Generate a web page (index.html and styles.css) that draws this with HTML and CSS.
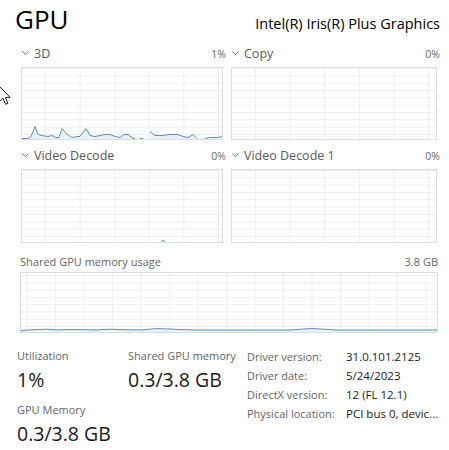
FILE: index.html
```html
<!DOCTYPE html>
<html lang="en">
<head>
<meta charset="utf-8">
<title>GPU</title>
<link rel="stylesheet" href="styles.css">
</head>
<body>
<div class="page">
  <header class="top">
    <h1 class="title">GPU</h1>
    <div class="adapter">Intel(R) Iris(R) Plus Graphics</div>
  </header>

  <section class="engines">
    <div class="engine">
      <div class="engine-head">
        <span class="engine-name"><svg class="chev" width="7" height="4" viewBox="0 0 7 4"><polyline points="0.5,0.5 3.5,3.5 6.5,0.5" /></svg>3D</span>
        <span class="pct">1%</span>
      </div>
      <div class="chart">
        <svg class="plot" viewBox="0 0 200 71.5" preserveAspectRatio="none">
          <path class="area" d="M0 71.5 L0 70.5 L6 70.5 L9 68.5 L13 58.5 L16 66.5 L20 67.5 L26 68.5 L30 67.5 L34 69.5 L37 69.5 L40 60.5 L44 65.5 L50 69.5 L55 68.5 L58 68.5 L64 60.5 L68 67.5 L73 68.5 L78 67.5 L83 66.5 L88 66.5 L93 68.5 L98 69.5 L102 66.5 L106 66.5 L111 70.5 L113 70.5 L113 71.5 Z M128 71.5 L128 63.5 L133 67.5 L140 67.5 L148 66.5 L156 66.5 L161 68.5 L166 69.5 L171 66.5 L175 70.5 L175 71.5 Z M183 71.5 L183 70.5 L188 69.5 L196 69.5 L200 68.5 L200 71.5 Z"/>
          <path class="line" d="M0 70.5 L6 70.5 L9 68.5 L13 58.5 L16 66.5 L20 67.5 L26 68.5 L30 67.5 L34 69.5 L37 69.5 L40 60.5 L44 65.5 L50 69.5 L55 68.5 L58 68.5 L64 60.5 L68 67.5 L73 68.5 L78 67.5 L83 66.5 L88 66.5 L93 68.5 L98 69.5 L102 66.5 L106 66.5 L111 70.5 L113 70.5 M118 70.5 L121 70.5 M128 63.5 L133 67.5 L140 67.5 L148 66.5 L156 66.5 L161 68.5 L166 69.5 L171 66.5 L175 70.5 M183 70.5 L188 69.5 L196 69.5 L200 68.5"/>
        </svg>
      </div>
    </div>

    <div class="engine">
      <div class="engine-head">
        <span class="engine-name"><svg class="chev" width="7" height="4" viewBox="0 0 7 4"><polyline points="0.5,0.5 3.5,3.5 6.5,0.5" /></svg>Copy</span>
        <span class="pct">0%</span>
      </div>
      <div class="chart"></div>
    </div>

    <div class="engine">
      <div class="engine-head">
        <span class="engine-name"><svg class="chev" width="7" height="4" viewBox="0 0 7 4"><polyline points="0.5,0.5 3.5,3.5 6.5,0.5" /></svg>Video Decode</span>
        <span class="pct">0%</span>
      </div>
      <div class="chart">
        <svg class="plot" viewBox="0 0 200 71.5" preserveAspectRatio="none">
          <path class="line" d="M139 71.3 L141 70.6 L143 71.3"/>
        </svg>
      </div>
    </div>

    <div class="engine">
      <div class="engine-head">
        <span class="engine-name"><svg class="chev" width="7" height="4" viewBox="0 0 7 4"><polyline points="0.5,0.5 3.5,3.5 6.5,0.5" /></svg>Video Decode 1</span>
        <span class="pct">0%</span>
      </div>
      <div class="chart"></div>
    </div>
  </section>

  <section class="shared">
    <div class="shared-head">
      <span>Shared GPU memory usage</span>
      <span>3.8 GB</span>
    </div>
    <div class="chart chart-wide">
      <svg class="plot" viewBox="0 0 416 59" preserveAspectRatio="none">
        <path class="area" d="M0 59 L0 57.5 L15 56.6 L27 56.2 L35 57 L45 56.6 L60 56.6 L75 57 L88 56.2 L100 56.6 L118 57 L125 56.6 L135 55.6 L148 56 L160 56.6 L175 57 L270 57 L280 56.2 L290 55.6 L300 56 L315 57 L416 57 L416 59 Z"/>
        <path class="line" d="M0 59 L0 57.5 L15 56.6 L27 56.2 L35 57 L45 56.6 L60 56.6 L75 57 L88 56.2 L100 56.6 L118 57 L125 56.6 L135 55.6 L148 56 L160 56.6 L175 57 L270 57 L280 56.2 L290 55.6 L300 56 L315 57 L416 57"/>
      </svg>
    </div>
  </section>

  <section class="stats">
    <div class="stat-col">
      <div class="stat">
        <div class="stat-label">Utilization</div>
        <div class="stat-value">1%</div>
      </div>
      <div class="stat">
        <div class="stat-label">GPU Memory</div>
        <div class="stat-value">0.3/3.8 GB</div>
      </div>
    </div>
    <div class="stat-col">
      <div class="stat">
        <div class="stat-label">Shared GPU memory</div>
        <div class="stat-value">0.3/3.8 GB</div>
      </div>
    </div>
    <dl class="props">
      <dt>Driver version:</dt><dd>31.0.101.2125</dd>
      <dt>Driver date:</dt><dd>5/24/2023</dd>
      <dt>DirectX version:</dt><dd>12 (FL 12.1)</dd>
      <dt>Physical location:</dt><dd>PCI bus 0, devic...</dd>
    </dl>
  </section>

  <svg class="cursor" width="13" height="20" viewBox="0 0 13 20">
    <path d="M0.5 0.5 L0.5 15.5 L4 12.2 L6.6 18.3 L8.9 17.3 L6.4 11.4 L11.2 11.4 Z"/>
  </svg>
</div>
</body>
</html>
```

FILE: styles.css
```css
html, body {
  margin: 0;
  padding: 0;
  background: #ffffff;
}

body {
  font-family: "Open Sans", "Noto Sans", sans-serif;
  color: #1a1a1a;
  width: 449px;
  height: 450px;
  overflow: hidden;
}

.page {
  position: relative;
  height: 450px;
}

/* Header */
.top {
  display: flex;
  justify-content: space-between;
  align-items: baseline;
  padding: 4px 9px 0 15px;
}

.title {
  margin: 0;
  font-size: 26px;
  line-height: 30px;
  font-weight: 400;
  color: #000;
}

.adapter {
  font-size: 14.5px;
  color: #000;
}

/* Engine charts */
.engines {
  display: grid;
  grid-template-columns: 202px 206px;
  column-gap: 8px;
  row-gap: 7px;
  padding-left: 21px;
  margin-top: 10.6px;
}

.engine-head {
  display: flex;
  justify-content: space-between;
  align-items: baseline;
  height: 18px;
  line-height: 18px;
  margin: 0 -3px 4px 0;
  padding-left: 1px;
}

.engine-name {
  font-size: 12.5px;
  color: #5a5a5a;
}

.chev {
  display: inline-block;
  vertical-align: 3px;
  margin-right: 5px;
}

.chev polyline {
  fill: none;
  stroke: #7a7a7a;
  stroke-width: 1;
}

.pct {
  font-size: 10.5px;
  color: #6a6a6a;
}

.chart {
  box-sizing: border-box;
  height: 73.5px;
  border: 1px solid #dedede;
  background-color: #ffffff;
  background-image:
    linear-gradient(to right, #ededed 1px, transparent 1px),
    linear-gradient(to bottom, #efefef 1px, transparent 1px);
  background-size: 34.6px 100%, 100% 7.35px;
  background-position: 23px 0, 0 0;
}

.plot {
  display: block;
  width: 100%;
  height: 100%;
}

.plot .line {
  fill: none;
  stroke: #5b8ec4;
  stroke-width: 1;
  vector-effect: non-scaling-stroke;
}

.plot .area {
  fill: #e9f2fb;
  stroke: none;
}

/* Shared memory */
.shared {
  padding: 0 11px 0 20px;
  margin-top: 12px;
}

.shared-head {
  display: flex;
  justify-content: space-between;
  font-size: 11px;
  line-height: 14px;
  color: #666;
  margin-bottom: 3.3px;
}

.chart-wide {
  height: 61px;
  background-size: 28.5px 100%, 100% 7.3px;
  background-position: 34px 0, 0 2px;
}

/* Stats */
.stats {
  display: grid;
  grid-template-columns: 111px 119px 1fr;
  align-items: start;
  padding-left: 17px;
  margin-top: 13.8px;
}

.stat-col {
  display: flex;
  flex-direction: column;
  gap: 11px;
  padding-top: 1.9px;
}

.stat-label {
  font-size: 11px;
  line-height: 14px;
  color: #666;
}

.stat-value {
  font-size: 19.5px;
  line-height: 24px;
  margin-top: 5px;
  color: #1a1a1a;
}

.props {
  display: grid;
  grid-template-columns: 99px 1fr;
  align-content: start;
  margin: 0;
  font-size: 11px;
  line-height: 19.2px;
}

.props dt {
  color: #666;
}

.props dd {
  margin: 0;
  color: #1a1a1a;
  font-size: 11.5px;
  white-space: nowrap;
}

/* Mouse pointer overlay */
.cursor {
  position: absolute;
  left: -1px;
  top: 86px;
}

.cursor path {
  fill: #fff;
  stroke: #222;
  stroke-width: 1;
}
```
